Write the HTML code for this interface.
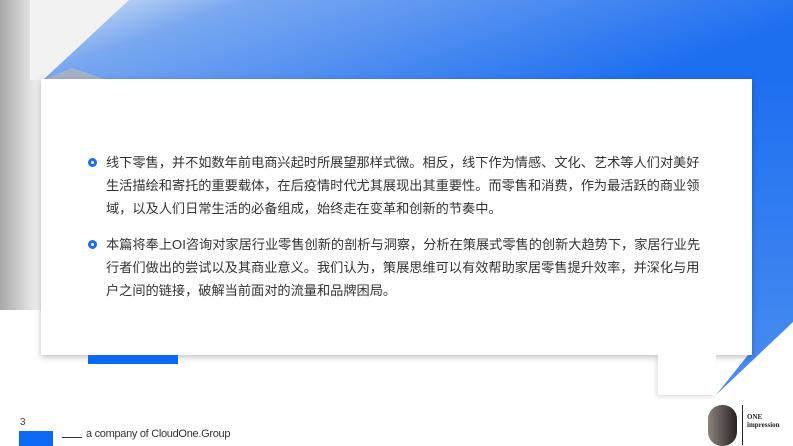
<!DOCTYPE html>
<html><head><meta charset="utf-8"><style>
*{margin:0;padding:0;box-sizing:border-box}
body{width:793px;height:446px;overflow:hidden;background:#fff;position:relative;font-family:"Liberation Sans","Noto Sans CJK SC",sans-serif}
.abs{position:absolute}
.txt{left:106px;font-size:13.2px;line-height:23px;color:#333;white-space:nowrap}
.dot{width:9px;height:9px;border-radius:50%;border:3px solid #1a6cf0;left:88px}
</style></head><body>
<div class="abs" style="left:0;top:0;width:42px;height:310px;background:linear-gradient(90deg,#a8a8a8,#c8c8c8 40%,#e8e8e8 80%,#f2f2f2)"></div>
<div class="abs" style="left:30px;top:0;width:110px;height:80px;background:#f2f2f2"></div>
<svg class="abs" style="left:0;top:0" width="793" height="400">
<defs>
<linearGradient id="g" x1="0" y1="0" x2="1" y2="0.3"><stop offset="0" stop-color="#dce6f4"/><stop offset="0.25" stop-color="#7aa8f0"/><stop offset="1" stop-color="#1e6ff0"/></linearGradient>
<linearGradient id="g2" x1="0" y1="0" x2="0" y2="1"><stop offset="0" stop-color="#1e6ff0"/><stop offset="1" stop-color="#4a8ef0"/></linearGradient>
</defs>
<polygon points="129,0 793,0 793,80 43,80" fill="url(#g)"/>
<polygon points="43,80 72,68 108,80" fill="#b8b8b8" opacity="0.7"/>
<polygon points="752,80 793,80 793,322 716,395 752,350" fill="url(#g2)"/>
</svg>
<div class="abs" style="left:41px;top:79px;width:711px;height:276px;background:#fff;box-shadow:0 2px 6px rgba(0,0,0,.25)"></div>
<div class="abs" style="left:658px;top:355px;width:58px;height:40px;background:#fff;box-shadow:-2px 2px 4px rgba(0,0,0,.12)"></div>
<div class="abs" style="left:88px;top:355px;width:90px;height:9px;background:#0b69f3"></div>
<div class="abs dot" style="top:158px"></div>
<div class="abs txt" style="top:151px">线下零售，并不如数年前电商兴起时所展望那样式微。相反，线下作为情感、文化、艺术等人们对美好<br>生活描绘和寄托的重要载体，在后疫情时代尤其展现出其重要性。而零售和消费，作为最活跃的商业领<br>域，以及人们日常生活的必备组成，始终走在变革和创新的节奏中。</div>
<div class="abs dot" style="top:240px"></div>
<div class="abs txt" style="top:233px">本篇将奉上OI咨询对家居行业零售创新的剖析与洞察，分析在策展式零售的创新大趋势下，家居行业先<br>行者们做出的尝试以及其商业意义。我们认为，策展思维可以有效帮助家居零售提升效率，并深化与用<br>户之间的链接，破解当前面对的流量和品牌困局。</div>
<div class="abs" style="left:20px;top:417px;font-size:10px;color:#444">3</div>
<div class="abs" style="left:19px;top:431px;width:34px;height:15px;background:#0b69f3"></div>
<div class="abs" style="left:62px;top:437px;width:20px;height:1px;background:#333"></div>
<div class="abs" style="left:86px;top:428px;font-size:11px;color:#333;letter-spacing:-0.3px">a company of CloudOne.Group</div>
<div class="abs" style="left:708px;top:405px;width:29px;height:41px;border-radius:14px;background:linear-gradient(90deg,#8a8380,#2a2220)"></div>
<div class="abs" style="left:742px;top:405px;width:1px;height:40px;background:#222"></div>
<div class="abs" style="left:747px;top:413px;font-family:'Liberation Serif',serif;font-size:7px;line-height:8px;color:#222;font-weight:bold">ONE<br>impression</div>
</body></html>
